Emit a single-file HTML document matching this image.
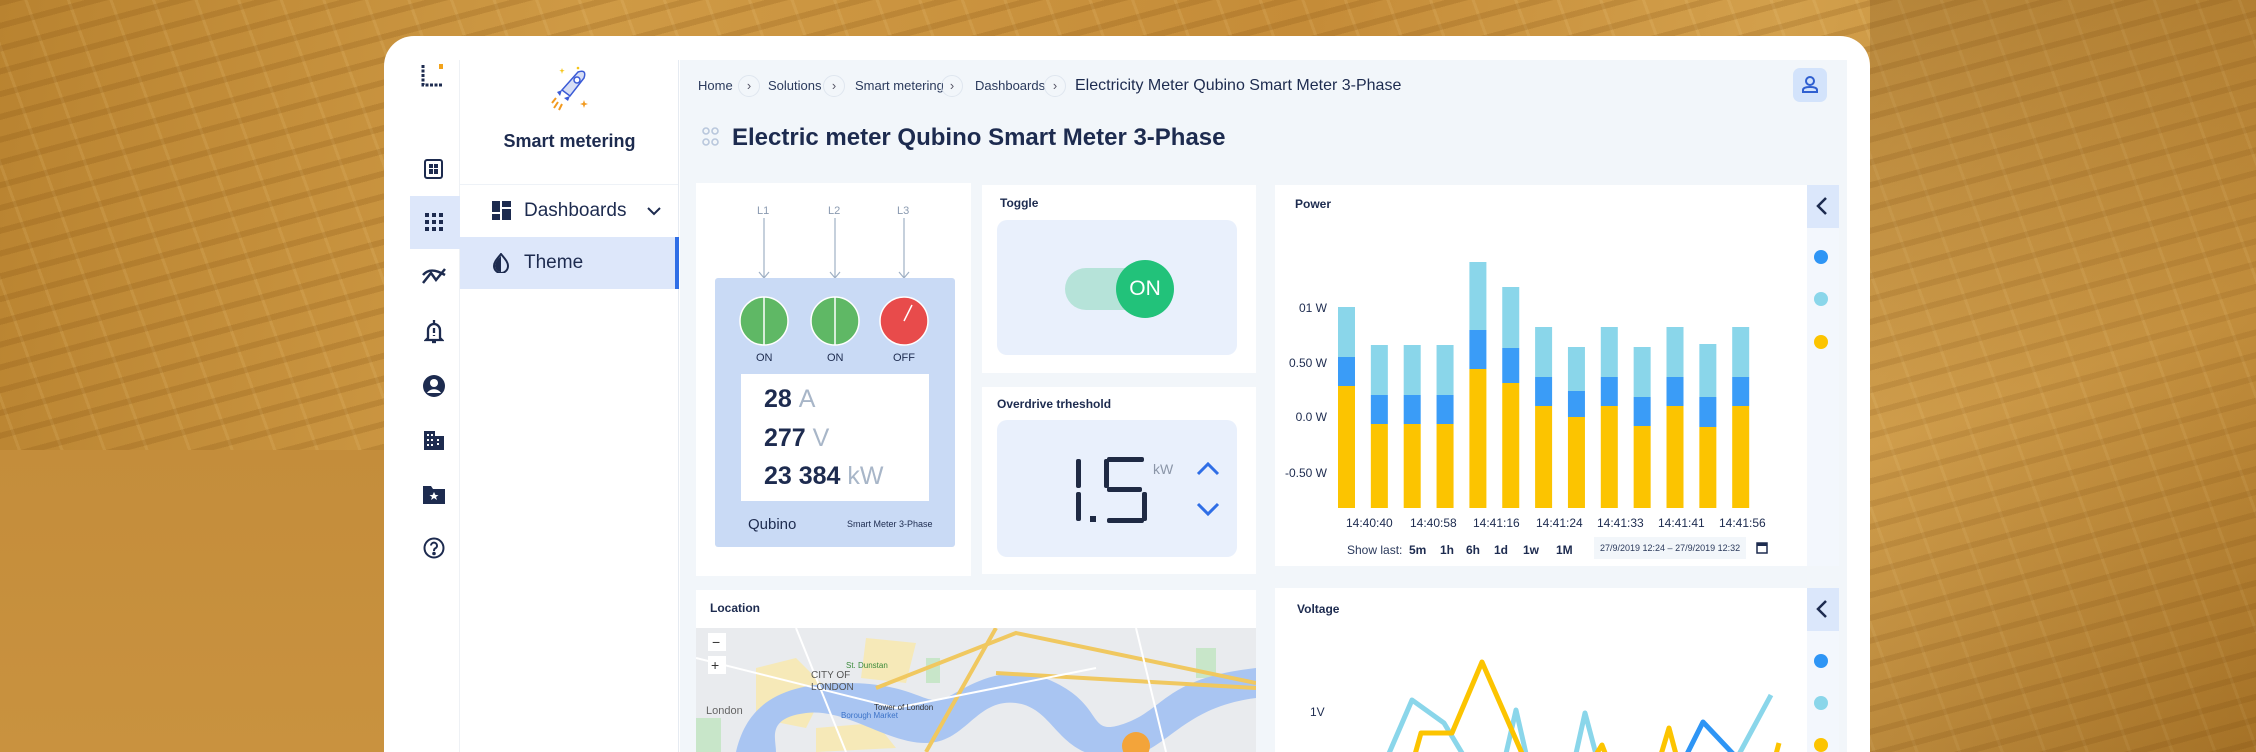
<!DOCTYPE html>
<html style="width:2256px;height:752px;overflow:hidden"><head><meta charset="utf-8"><style>
*{margin:0;padding:0;box-sizing:border-box}
body{width:2256px;height:752px;overflow:hidden;position:relative;font-family:"Liberation Sans",sans-serif;color:#1d2b4f;
background:linear-gradient(100deg,#b98330 0%,#cf9a45 25%,#c58c38 55%,#d3a04c 75%,#b7802d 100%)}
.bgs{position:absolute;inset:0;background:
repeating-linear-gradient(165deg,rgba(120,70,10,.18) 0 6px,transparent 6px 22px),
repeating-linear-gradient(70deg,rgba(255,230,170,.10) 0 3px,transparent 3px 40px)}
.a{position:absolute}
.card{position:absolute;left:384px;top:36px;width:1486px;height:716px;background:#fff;border-radius:30px 30px 0 0}
.t{position:absolute;white-space:nowrap}
.box{position:absolute;background:#fff}
.chev{position:absolute;width:22px;height:22px;border-radius:50%;border:1px solid #dfe6ef;top:75px;font-size:13px;color:#556;text-align:center;line-height:20px}
</style></head><body>
<div class="bgs"></div>
<div class="a" style="left:0;top:450px;width:384px;height:302px;background:linear-gradient(180deg,#c48d3b,#c9923f)"></div>
<div class="a" style="left:1870px;top:0;width:386px;height:752px;background:linear-gradient(160deg,rgba(110,70,20,.25),rgba(230,190,120,.15) 50%,rgba(110,70,20,.25))"></div>
<div class="card"></div>
<!-- rail -->
<div class="a" style="left:410px;top:60px;width:50px;height:692px;background:#fff;border-right:1px solid #eef1f5"></div>
<div class="a" style="left:410px;top:196px;width:50px;height:53px;background:#dde7fa"></div>
<svg class="a" style="left:420px;top:62px" width="26" height="26" viewBox="0 0 26 26"><path d="M3 3v20h20" stroke="#1d2b4f" stroke-width="3" fill="none" stroke-dasharray="3 1.5"/><rect x="19" y="2" width="4" height="5" fill="#f2a31b"/></svg>
<svg class="a" style="left:422px;top:157px" width="24" height="24" viewBox="0 0 24 24" fill="#1d2b4f"><rect x="3" y="3" width="17" height="18" rx="2" fill="none" stroke="#1d2b4f" stroke-width="2"/><rect x="7" y="7" width="4" height="4"/><rect x="12" y="7" width="4" height="4"/><rect x="7" y="12" width="4" height="5"/><rect x="12" y="12" width="4" height="5"/></svg>
<svg class="a" style="left:424px;top:212px" width="20" height="20" viewBox="0 0 20 20" fill="#1d2b4f"><rect x="1" y="1" width="4" height="4"/><rect x="8" y="1" width="4" height="4"/><rect x="15" y="1" width="4" height="4"/><rect x="1" y="8" width="4" height="4"/><rect x="8" y="8" width="4" height="4"/><rect x="15" y="8" width="4" height="4"/><rect x="1" y="15" width="4" height="4"/><rect x="8" y="15" width="4" height="4"/><rect x="15" y="15" width="4" height="4"/></svg>
<svg class="a" style="left:421px;top:265px" width="26" height="22" viewBox="0 0 26 22" fill="none" stroke="#1d2b4f" stroke-width="2.5"><path d="M2 18 10 8l5 7 9-11"/><path d="M2 10c5-6 12-6 22 0"/></svg>
<svg class="a" style="left:424px;top:318px" width="20" height="26" viewBox="0 0 20 26" fill="none" stroke="#1d2b4f" stroke-width="2.3"><path d="M10 2v3M4 20V12a6 6 0 0 1 12 0v8l2 2H2z"/><path d="M10 10v5M10 17v1"/><path d="M8 24h4"/></svg>
<svg class="a" style="left:422px;top:374px" width="24" height="24" viewBox="0 0 24 24"><circle cx="12" cy="12" r="11" fill="#1d2b4f"/><circle cx="12" cy="9" r="4" fill="#fff"/><path d="M5 19c3-5 11-5 14 0" fill="#fff"/></svg>
<svg class="a" style="left:422px;top:428px" width="24" height="24" viewBox="0 0 24 24" fill="#1d2b4f"><path d="M2 22V3h11v5h9v14z"/><g fill="#fff"><rect x="5" y="6" width="2" height="2"/><rect x="9" y="6" width="2" height="2"/><rect x="5" y="11" width="2" height="2"/><rect x="9" y="11" width="2" height="2"/><rect x="15" y="11" width="2" height="2"/><rect x="15" y="15" width="2" height="2"/><rect x="5" y="16" width="2" height="2"/><rect x="9" y="16" width="2" height="2"/></g></svg>
<svg class="a" style="left:422px;top:483px" width="24" height="22" viewBox="0 0 24 22"><path d="M1 3h8l2 3h12v15H1z" fill="#1d2b4f"/><path d="M12 9l1.5 3h3l-2.5 2 1 3-3-2-3 2 1-3-2.5-2h3z" fill="#fff"/></svg>
<svg class="a" style="left:423px;top:537px" width="22" height="22" viewBox="0 0 22 22" fill="none" stroke="#1d2b4f" stroke-width="2"><circle cx="11" cy="11" r="9.5"/><path d="M8 8.5a3 3 0 1 1 4 3c-1 .5-1 1.5-1 2.5"/><circle cx="11" cy="16.5" r=".8" fill="#1d2b4f"/></svg>
<!-- sidebar -->
<div class="a" style="left:460px;top:60px;width:219px;height:692px;background:#fff;border-right:1px solid #e6ebf2"></div>
<svg class="a" style="left:548px;top:64px" width="44" height="50" viewBox="0 0 44 50"><path d="M30 8c6-2 8 0 6 6L22 32l-8-6z" fill="#d7def5" stroke="#3b5bd6" stroke-width="1.5"/><circle cx="29" cy="16" r="3" fill="#fff" stroke="#3b5bd6" stroke-width="1.5"/><path d="M14 26l-5 2 3 4zM22 32l-2 5-4-3z" fill="#3b5bd6"/><path d="M10 38l-4 6M14 40l-3 6M8 34l-4 5" stroke="#f29a1f" stroke-width="2"/><path d="M36 36l1 3 3 1-3 1-1 3-1-3-3-1 3-1z" fill="#f29a1f"/><path d="M14 4l.7 2 2 .7-2 .7L14 10l-.7-2.6-2-.7 2-.7z" fill="#f5c518"/><circle cx="30" cy="4" r="1.3" fill="#f5c518"/></svg>
<div class="t" style="left:460px;width:219px;text-align:center;top:131px;font-size:18px;font-weight:bold;color:#1d2b4f">Smart metering</div>
<div class="a" style="left:460px;top:184px;width:218px;height:1px;background:#eef2f7"></div>
<svg class="a" style="left:492px;top:201px" width="19" height="19" viewBox="0 0 19 19" fill="#1d2b4f"><rect x="0" y="0" width="8" height="11"/><rect x="10" y="0" width="9" height="6"/><rect x="0" y="13" width="8" height="6"/><rect x="10" y="8" width="9" height="11"/></svg>
<div class="t" style="left:524px;top:200px;font-size:19px;color:#1d2b4f">Dashboards</div>
<svg class="a" style="left:647px;top:206px" width="14" height="10" viewBox="0 0 14 10"><path d="M1 2l6 6 6-6" stroke="#1d2b4f" stroke-width="2" fill="none"/></svg>
<div class="a" style="left:460px;top:237px;width:219px;height:52px;background:#dde7fa;border-right:4px solid #2f6ee6"></div>
<svg class="a" style="left:493px;top:253px" width="16" height="20" viewBox="0 0 16 20"><path d="M8 1C4 6 1 9 1 13a7 7 0 0 0 14 0C15 9 12 6 8 1z" fill="none" stroke="#1d2b4f" stroke-width="2"/><path d="M8 3v16a6 6 0 0 1-6-6c0-4 3-7 6-10z" fill="#1d2b4f"/></svg>
<div class="t" style="left:524px;top:252px;font-size:19px;color:#1d2b4f">Theme</div>
<!-- main -->
<div class="a" style="left:680px;top:60px;width:1167px;height:692px;background:#f2f6fa"></div>
<div class="t" style="left:698px;top:78px;font-size:13px;color:#2b3a5c">Home</div>
<div class="chev" style="left:738px">›</div>
<div class="t" style="left:768px;top:78px;font-size:13px;color:#2b3a5c">Solutions</div>
<div class="chev" style="left:823px">›</div>
<div class="t" style="left:855px;top:78px;font-size:13px;color:#2b3a5c">Smart metering</div>
<div class="chev" style="left:941px">›</div>
<div class="t" style="left:975px;top:78px;font-size:13px;color:#2b3a5c">Dashboards</div>
<div class="chev" style="left:1044px">›</div>
<div class="t" style="left:1075px;top:77px;font-size:16px;color:#1d2b4f">Electricity Meter Qubino Smart Meter 3-Phase</div>
<div class="a" style="left:1793px;top:68px;width:34px;height:34px;border-radius:7px;background:#d3e3fb"></div>
<svg class="a" style="left:1801px;top:75px" width="18" height="19" viewBox="0 0 18 19" fill="none" stroke="#2f5fd0" stroke-width="2"><circle cx="9" cy="6" r="4"/><path d="M2 17v-2c0-2 3-3 7-3s7 1 7 3v2z"/></svg>
<svg class="a" style="left:702px;top:127px" width="18" height="20" viewBox="0 0 18 20" fill="none" stroke="#b9c7dc" stroke-width="1.6"><circle cx="4" cy="4" r="3"/><circle cx="13" cy="4" r="3"/><circle cx="4" cy="15" r="3"/><circle cx="13" cy="15" r="3"/></svg>
<div class="t" style="left:732px;top:124px;font-size:24px;font-weight:bold;color:#1d2b4f">Electric meter Qubino Smart Meter 3-Phase</div>

<!-- meter card -->
<div class="box" style="left:696px;top:183px;width:275px;height:393px"></div>
<div class="t" style="left:757px;top:205px;font-size:11px;color:#8a9ab0">L1</div>
<div class="t" style="left:828px;top:205px;font-size:11px;color:#8a9ab0">L2</div>
<div class="t" style="left:897px;top:205px;font-size:11px;color:#8a9ab0">L3</div>
<svg class="a" style="left:696px;top:218px" width="275" height="62"><g stroke="#9fb0c4" stroke-width="1.2" fill="none"><path d="M68 0v60M63 54l5 6 5-6M139 0v60M134 54l5 6 5-6M208 0v60M203 54l5 6 5-6"/></g></svg>
<div class="a" style="left:715px;top:278px;width:240px;height:269px;background:#c9daf5;border-radius:3px"></div>
<svg class="a" style="left:715px;top:295px" width="240" height="60"><g stroke="#fff" stroke-width="1.5"><circle cx="49" cy="26" r="24" fill="#5fb865"/><path d="M49 2v48"/><circle cx="120" cy="26" r="24" fill="#5fb865"/><path d="M120 2v48"/><circle cx="189" cy="26" r="24" fill="#e84b4b"/><path d="M189 26l8-16"/></g></svg>
<div class="t" style="left:756px;top:352px;font-size:11px;color:#1d2b4f">ON</div>
<div class="t" style="left:827px;top:352px;font-size:11px;color:#1d2b4f">ON</div>
<div class="t" style="left:893px;top:352px;font-size:11px;color:#1d2b4f">OFF</div>
<div class="a" style="left:741px;top:374px;width:188px;height:127px;background:#fff"></div>
<div class="t" style="left:764px;top:385px;font-size:25px;font-weight:bold;color:#1d2b4f">28 <span style="font-weight:normal;color:#a8b6c8">A</span></div>
<div class="t" style="left:764px;top:424px;font-size:25px;font-weight:bold;color:#1d2b4f">277 <span style="font-weight:normal;color:#a8b6c8">V</span></div>
<div class="t" style="left:764px;top:462px;font-size:25px;font-weight:bold;color:#1d2b4f">23 384 <span style="font-weight:normal;color:#a8b6c8">kW</span></div>
<div class="t" style="left:748px;top:516px;font-size:15px;color:#1d2b4f">Qubino</div>
<div class="t" style="left:847px;top:519px;font-size:9px;color:#1d2b4f">Smart Meter 3-Phase</div>

<!-- toggle -->
<div class="box" style="left:982px;top:185px;width:274px;height:188px"></div>
<div class="t" style="left:1000px;top:196px;font-size:12px;font-weight:bold">Toggle</div>
<div class="a" style="left:997px;top:220px;width:240px;height:135px;background:#e9f0fc;border-radius:10px"></div>
<div class="a" style="left:1065px;top:268px;width:86px;height:42px;border-radius:21px;background:#b6e3d9"></div>
<div class="a" style="left:1116px;top:260px;width:58px;height:58px;border-radius:50%;background:#22c27a;color:#fff;font-size:21px;text-align:center;line-height:58px">ON</div>
<!-- overdrive -->
<div class="box" style="left:982px;top:387px;width:274px;height:187px"></div>
<div class="t" style="left:997px;top:397px;font-size:12px;font-weight:bold">Overdrive trheshold</div>
<div class="a" style="left:997px;top:420px;width:240px;height:137px;background:#e9f0fc;border-radius:10px"></div>
<svg class="a" style="left:1074px;top:456px" width="80" height="70" viewBox="0 0 80 70" fill="#1f2a44"><rect x="2" y="3" width="5" height="29" rx="2"/><rect x="2" y="36" width="5" height="29" rx="2"/><rect x="16" y="60" width="6" height="6"/><rect x="30" y="3" width="5" height="29" rx="2"/><rect x="33" y="1" width="37" height="5" rx="2"/><rect x="33" y="31" width="35" height="5" rx="2"/><rect x="68" y="36" width="5" height="29" rx="2"/><rect x="33" y="62" width="37" height="5" rx="2"/></svg>
<div class="t" style="left:1153px;top:461px;font-size:14px;color:#8b96a8">kW</div>
<svg class="a" style="left:1196px;top:460px" width="24" height="60" viewBox="0 0 24 60" fill="none" stroke="#2f6ee6" stroke-width="3"><path d="M2 14l10-10 10 10M2 44l10 10 10-10"/></svg>

<!-- power -->
<div class="box" style="left:1275px;top:185px;width:564px;height:381px"></div>
<div class="a" style="left:1807px;top:185px;width:32px;height:381px;background:#f3f7fd"></div>
<div class="a" style="left:1807px;top:185px;width:32px;height:43px;background:#dbe7fb"></div>
<svg class="a" style="left:1815px;top:196px" width="14" height="20"><path d="M11 2 3 10l8 8" stroke="#1d2b4f" stroke-width="2.5" fill="none"/></svg>
<div class="a" style="left:1814px;top:250px;width:14px;height:14px;border-radius:50%;background:#2e95f5"></div>
<div class="a" style="left:1814px;top:292px;width:14px;height:14px;border-radius:50%;background:#8ad6ea"></div>
<div class="a" style="left:1814px;top:335px;width:14px;height:14px;border-radius:50%;background:#fcc400"></div>
<div class="t" style="left:1295px;top:197px;font-size:12px;font-weight:bold">Power</div>
<div class="t" style="left:1260px;width:67px;text-align:right;top:301px;font-size:12px;color:#1d2b4f">01 W</div>
<div class="t" style="left:1260px;width:67px;text-align:right;top:356px;font-size:12px;color:#1d2b4f">0.50 W</div>
<div class="t" style="left:1260px;width:67px;text-align:right;top:410px;font-size:12px;color:#1d2b4f">0.0 W</div>
<div class="t" style="left:1260px;width:67px;text-align:right;top:466px;font-size:12px;color:#1d2b4f">-0.50 W</div>
<svg class="a" style="left:1330px;top:250px" width="470" height="260">
<g><rect x="8" y="57" width="17" height="50" fill="#8ad6ea"/><rect x="8" y="107" width="17" height="29" fill="#3a9cf7"/><rect x="8" y="136" width="17" height="122" fill="#fcc400"/></g>
<g><rect x="40.85" y="95" width="17" height="50" fill="#8ad6ea"/><rect x="40.85" y="145" width="17" height="29" fill="#3a9cf7"/><rect x="40.85" y="174" width="17" height="84" fill="#fcc400"/></g>
<g><rect x="73.7" y="95" width="17" height="50" fill="#8ad6ea"/><rect x="73.7" y="145" width="17" height="29" fill="#3a9cf7"/><rect x="73.7" y="174" width="17" height="84" fill="#fcc400"/></g>
<g><rect x="106.55" y="95" width="17" height="50" fill="#8ad6ea"/><rect x="106.55" y="145" width="17" height="29" fill="#3a9cf7"/><rect x="106.55" y="174" width="17" height="84" fill="#fcc400"/></g>
<g><rect x="139.4" y="12" width="17" height="68" fill="#8ad6ea"/><rect x="139.4" y="80" width="17" height="39" fill="#3a9cf7"/><rect x="139.4" y="119" width="17" height="139" fill="#fcc400"/></g>
<g><rect x="172.25" y="37" width="17" height="61" fill="#8ad6ea"/><rect x="172.25" y="98" width="17" height="35" fill="#3a9cf7"/><rect x="172.25" y="133" width="17" height="125" fill="#fcc400"/></g>
<g><rect x="205.1" y="77" width="17" height="50" fill="#8ad6ea"/><rect x="205.1" y="127" width="17" height="29" fill="#3a9cf7"/><rect x="205.1" y="156" width="17" height="102" fill="#fcc400"/></g>
<g><rect x="237.95" y="97" width="17" height="44" fill="#8ad6ea"/><rect x="237.95" y="141" width="17" height="26" fill="#3a9cf7"/><rect x="237.95" y="167" width="17" height="91" fill="#fcc400"/></g>
<g><rect x="270.8" y="77" width="17" height="50" fill="#8ad6ea"/><rect x="270.8" y="127" width="17" height="29" fill="#3a9cf7"/><rect x="270.8" y="156" width="17" height="102" fill="#fcc400"/></g>
<g><rect x="303.65" y="97" width="17" height="50" fill="#8ad6ea"/><rect x="303.65" y="147" width="17" height="29" fill="#3a9cf7"/><rect x="303.65" y="176" width="17" height="82" fill="#fcc400"/></g>
<g><rect x="336.5" y="77" width="17" height="50" fill="#8ad6ea"/><rect x="336.5" y="127" width="17" height="29" fill="#3a9cf7"/><rect x="336.5" y="156" width="17" height="102" fill="#fcc400"/></g>
<g><rect x="369.35" y="94" width="17" height="53" fill="#8ad6ea"/><rect x="369.35" y="147" width="17" height="30" fill="#3a9cf7"/><rect x="369.35" y="177" width="17" height="81" fill="#fcc400"/></g>
<g><rect x="402.2" y="77" width="17" height="50" fill="#8ad6ea"/><rect x="402.2" y="127" width="17" height="29" fill="#3a9cf7"/><rect x="402.2" y="156" width="17" height="102" fill="#fcc400"/></g>
</svg>
<div class="t" style="left:1346px;top:516px;font-size:12px;color:#1d2b4f">14:40:40</div>
<div class="t" style="left:1410px;top:516px;font-size:12px;color:#1d2b4f">14:40:58</div>
<div class="t" style="left:1473px;top:516px;font-size:12px;color:#1d2b4f">14:41:16</div>
<div class="t" style="left:1536px;top:516px;font-size:12px;color:#1d2b4f">14:41:24</div>
<div class="t" style="left:1597px;top:516px;font-size:12px;color:#1d2b4f">14:41:33</div>
<div class="t" style="left:1658px;top:516px;font-size:12px;color:#1d2b4f">14:41:41</div>
<div class="t" style="left:1719px;top:516px;font-size:12px;color:#1d2b4f">14:41:56</div>
<div class="t" style="left:1347px;top:543px;font-size:12px;color:#2b3a5c">Show last:</div>
<div class="t" style="left:1409px;top:543px;font-size:12px;font-weight:bold">5m</div>
<div class="t" style="left:1440px;top:543px;font-size:12px;font-weight:bold">1h</div>
<div class="t" style="left:1466px;top:543px;font-size:12px;font-weight:bold">6h</div>
<div class="t" style="left:1494px;top:543px;font-size:12px;font-weight:bold">1d</div>
<div class="t" style="left:1523px;top:543px;font-size:12px;font-weight:bold">1w</div>
<div class="t" style="left:1556px;top:543px;font-size:12px;font-weight:bold">1M</div>
<div class="a" style="left:1594px;top:537px;width:152px;height:22px;background:#f2f6fa"></div>
<div class="t" style="left:1600px;top:543px;font-size:9px;color:#2b3a5c">27/9/2019 12:24 – 27/9/2019 12:32</div>
<svg class="a" style="left:1756px;top:541px" width="12" height="13"><rect x="1" y="2" width="10" height="10" fill="none" stroke="#1d2b4f" stroke-width="1.5"/><rect x="1" y="2" width="10" height="3" fill="#1d2b4f"/></svg>

<!-- location -->
<div class="box" style="left:696px;top:590px;width:560px;height:162px"></div>
<div class="t" style="left:710px;top:601px;font-size:12px;font-weight:bold">Location</div>
<svg class="a" style="left:696px;top:628px" width="560" height="124" viewBox="0 0 560 124">
<rect width="560" height="124" fill="#e9ebee"/>
<g fill="#f6e9b8"><path d="M60 40l40-10 30 30-20 40-50-10z"/><path d="M170 10l50 5-10 40-45-5z"/><path d="M120 100l60-5 20 25-80 4z"/></g>
<g fill="#c8e6c9"><rect x="230" y="30" width="14" height="25"/><rect x="390" y="110" width="20" height="14"/><rect x="0" y="90" width="25" height="34"/><rect x="500" y="20" width="20" height="30"/></g>
<path d="M40 124C50 80 80 55 150 55S230 80 250 70 310 30 360 55 390 110 430 95 470 50 560 40v30c-80 10-90 60-140 60-60 0-60-50-100-55-40-5-50 40-90 40S150 80 110 85 80 110 80 124z" fill="#a9c5f2"/>
<g stroke="#f0c860" stroke-width="4" fill="none"><path d="M180 60L320 5 560 55"/><path d="M230 124L300 0"/><path d="M300 45L560 60"/></g>
<g stroke="#fff" stroke-width="2" fill="none"><path d="M0 30L200 80 400 40M100 0L150 124M440 0L470 124"/></g>
<rect x="12" y="5" width="18" height="18" fill="#fff"/><text x="16" y="19" font-size="14" fill="#333" font-family="Liberation Sans">−</text>
<rect x="12" y="28" width="18" height="18" fill="#fff"/><text x="15" y="42" font-size="14" fill="#333" font-family="Liberation Sans">+</text>
<text x="115" y="50" font-size="10" fill="#555" font-family="Liberation Sans">CITY OF</text><text x="115" y="62" font-size="10" fill="#555" font-family="Liberation Sans">LONDON</text>
<text x="10" y="86" font-size="11" fill="#666" font-family="Liberation Sans">London</text>
<text x="178" y="82" font-size="8" fill="#333" font-family="Liberation Sans">Tower of London</text>
<text x="150" y="40" font-size="8" fill="#3a8a3a" font-family="Liberation Sans">St. Dunstan</text>
<text x="145" y="90" font-size="8" fill="#3c73c8" font-family="Liberation Sans">Borough Market</text>
<circle cx="440" cy="118" r="14" fill="#f3a43a"/>
</svg>

<!-- voltage -->
<div class="box" style="left:1275px;top:588px;width:564px;height:164px"></div>
<div class="a" style="left:1807px;top:588px;width:32px;height:164px;background:#f3f7fd"></div>
<div class="a" style="left:1807px;top:588px;width:32px;height:43px;background:#dbe7fb"></div>
<svg class="a" style="left:1815px;top:599px" width="14" height="20"><path d="M11 2 3 10l8 8" stroke="#1d2b4f" stroke-width="2.5" fill="none"/></svg>
<div class="a" style="left:1814px;top:654px;width:14px;height:14px;border-radius:50%;background:#2e95f5"></div>
<div class="a" style="left:1814px;top:696px;width:14px;height:14px;border-radius:50%;background:#8ad6ea"></div>
<div class="a" style="left:1814px;top:738px;width:14px;height:14px;border-radius:50%;background:#fcc400"></div>
<div class="t" style="left:1297px;top:602px;font-size:12px;font-weight:bold">Voltage</div>
<div class="t" style="left:1310px;top:705px;font-size:12px">1V</div>
<svg class="a" style="left:1275px;top:588px" width="540" height="164" fill="none" stroke-width="5" stroke-linejoin="round">
<path d="M112 170L137 112 169 135 190 170M230 170L241 122 252 170M300 170L310 125 322 170M462 170L496 107" stroke="#8ad6ea"/>
<path d="M139 170L146 145H177L207 74 249 170M322 165L327 157 332 170M385 170L394 140 402 170M500 170L504 155" stroke="#fcc400"/>
<path d="M410 170L428 134 462 170" stroke="#2e95f5"/>
</svg>
</body></html>
